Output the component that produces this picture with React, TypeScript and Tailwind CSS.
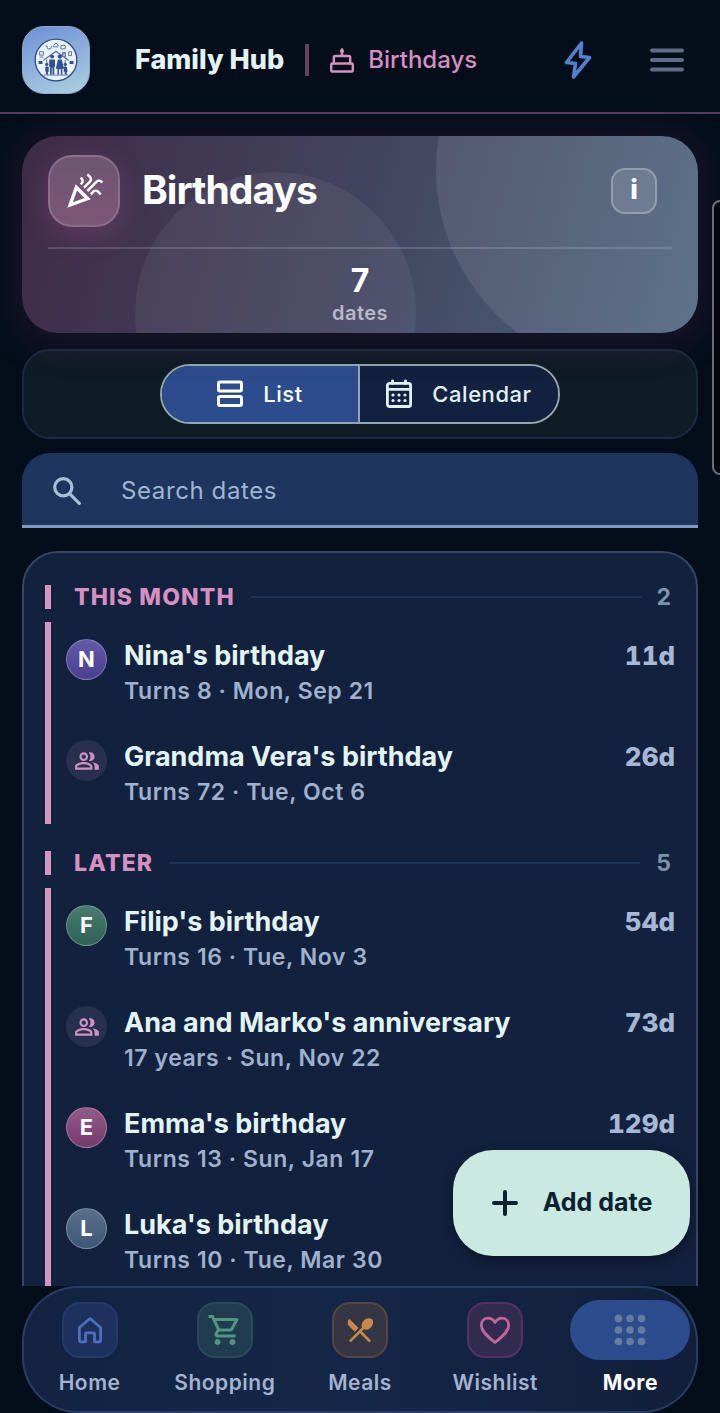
import React from "react";
import { MdOutlineCelebration, MdOutlinePeopleAlt, MdOutlineShoppingCart, MdRestaurantMenu } from "react-icons/md";

type Entry = { name: string; detail: string; days?: string; initial?: string; tone?: string };

const thisMonth: Entry[] = [
  { name: "Nina's birthday", detail: "Turns 8 · Mon, Sep 21", days: "11d", initial: "N", tone: "from-[#645ba6] to-[#4a3f90]" },
  { name: "Grandma Vera's birthday", detail: "Turns 72 · Tue, Oct 6", days: "26d" },
];

const later: Entry[] = [
  { name: "Filip's birthday", detail: "Turns 16 · Tue, Nov 3", days: "54d", initial: "F", tone: "from-[#4a7b70] to-[#2d6255]" },
  { name: "Ana and Marko's anniversary", detail: "17 years · Sun, Nov 22", days: "73d" },
  { name: "Emma's birthday", detail: "Turns 13 · Sun, Jan 17", days: "129d", initial: "E", tone: "from-[#925a8b] to-[#753a6d]" },
  { name: "Luka's birthday", detail: "Turns 10 · Tue, Mar 30", initial: "L", tone: "from-[#5b708b] to-[#3c5777]" },
];

function Logo() {
  return (
    <svg viewBox="0 0 68 68" className="size-full" aria-hidden="true">
      <circle cx="34" cy="34" r="21.5" fill="#eaf2fb" stroke="#31508f" strokeWidth="1.4" />
      <g fill="none" stroke="#5674ad" strokeWidth="1" strokeLinecap="round" strokeLinejoin="round">
        <path d="M21.500 34 34 25 46.500 34M41 29.500v-3h2.500v5" strokeWidth="1.400" />
        <path d="M24.500 34v11M43.500 34v11M22 49.500h24" />
        <path d="M23.500 19.500h1l1 3h3l1-2.500M32 18.500l2-2 2 2v2h-4zM39.500 19h4v3.500h-4zM17.500 25.500h3.500v3.500h-3.500zM17.500 31h3M47.500 25.500h2.500v4h-2.500z" />
      </g>
      <g fill="#31508f">
        <path d="M16 35h4v3h-4zM48 35h4v3h-4z" />
        <circle cx="30" cy="30.500" r="2" />
        <circle cx="38" cy="30.500" r="2.200" />
        <circle cx="24.500" cy="38.500" r="1.600" />
        <circle cx="43.500" cy="38.500" r="1.600" />
        <path d="M27 33.500h6V41h-.8v8h-1.800v-7h-.8v7h-1.800v-8H27zM36 33.500h4l2.200 9.500h-1.700v6H39v-5.500h-2V49h-1.500v-6h-1.700zM23 41h3.500v5h-.8v3h-2v-3H23zM42 41h3l1 5h-1v3h-2v-3h-1z" />
      </g>
    </svg>
  );
}

function CakeIcon() {
  return (
    <svg viewBox="0 0 24 27" className="h-[27px] w-6 shrink-0" fill="none" stroke="currentColor" strokeWidth="2.400" strokeLinejoin="round" strokeLinecap="round" aria-hidden="true">
      <rect x="1.200" y="16.500" width="21.600" height="8" rx="1" />
      <path d="M3.800 16.500v-6a1.500 1.500 0 0 1 1.500-1.500h13.400a1.500 1.500 0 0 1 1.500 1.500v6M12 9V5" />
      <path d="M12 .8c1.600 1.600 2.100 2.400 2.100 3.300a2.100 2.100 0 0 1-4.200 0c0-.9.500-1.700 2.100-3.300z" fill="currentColor" stroke="none" />
    </svg>
  );
}

function BoltIcon() {
  return (
    <svg viewBox="0 0 28 40" className="h-10 w-7" fill="none" stroke="#5280cf" strokeWidth="3.600" strokeLinejoin="round" aria-hidden="true">
      <path d="M17.500 3 2.500 22.500 11.500 23.500 9.500 37 25.500 17.500 16.500 16.500z" />
    </svg>
  );
}

function MenuIcon() {
  return (
    <svg viewBox="0 0 34 24" className="h-6 w-[34px]" stroke="#626c84" strokeWidth="4" strokeLinecap="round" aria-hidden="true">
      <path d="M2 2.500h30M2 12h30M2 21.500h30" />
    </svg>
  );
}

function RowsIcon() {
  return (
    <svg viewBox="0 0 26 28" className="h-7 w-[26px]" fill="none" stroke="currentColor" strokeWidth="3" aria-hidden="true">
      <rect x="1.500" y="2" width="23" height="9" rx="1.500" />
      <rect x="1.500" y="16.500" width="23" height="9" rx="1.500" />
    </svg>
  );
}

function CalendarIcon() {
  return (
    <svg viewBox="0 0 26 30" className="h-[30px] w-[26px]" aria-hidden="true">
      <g fill="none" stroke="currentColor" strokeWidth="2.800" strokeLinecap="round">
        <rect x="1.400" y="4.300" width="23.200" height="23.200" rx="2" />
        <path d="M1.500 10.300h23M6.500 1.800v2.500M19.500 1.800v2.500" />
      </g>
      <g fill="currentColor">
        {[16, 21.5].map((y) => [7, 13, 19].map((x) => <circle key={`${x}-${y}`} cx={x} cy={y} r="1.600" />))}
      </g>
    </svg>
  );
}

function SearchIcon() {
  return (
    <svg viewBox="0 0 28 28" className="size-7 shrink-0" fill="none" stroke="currentColor" strokeWidth="3.200" strokeLinecap="round" aria-hidden="true">
      <circle cx="10.300" cy="10.300" r="8.600" />
      <path d="m16.800 16.800 9.500 9.500" />
    </svg>
  );
}

function HomeIcon() {
  return (
    <svg viewBox="0 0 28 30" className="h-[30px] w-7" fill="none" stroke="#4c70bd" strokeWidth="2.800" strokeLinejoin="round" aria-hidden="true">
      <path d="M3.400 12.500 14 3.500l10.600 9v12.700a1.600 1.600 0 0 1-1.600 1.600h-4.500v-8a1 1 0 0 0-1-1h-7a1 1 0 0 0-1 1v8H5a1.600 1.600 0 0 1-1.600-1.600z" />
    </svg>
  );
}

function HeartIcon() {
  return (
    <svg viewBox="0 0 32 28" className="h-7 w-8" fill="none" stroke="#c2659d" strokeWidth="2.800" strokeLinejoin="round" aria-hidden="true">
      <path d="M16 26.500C6.500 19 2.300 14.500 2.300 9.300 2.300 5 5.300 2.200 9 2.200c2.800 0 5.300 1.500 7 4.300 1.700-2.800 4.200-4.300 7-4.300 3.700 0 6.700 2.800 6.700 7.100 0 5.200-4.200 9.700-13.700 17.200z" />
    </svg>
  );
}

function DotsIcon() {
  return (
    <svg viewBox="0 0 32 32" className="size-8" fill="#647d9c" aria-hidden="true">
      {[4.5, 16, 27.5].map((y) => [4.5, 16, 27.5].map((x) => <circle key={`${x}-${y}`} cx={x} cy={y} r="3.800" />))}
    </svg>
  );
}

function DateRow({ entry }: { entry: Entry }) {
  return (
    <li className="flex h-[101px] items-start pt-4 pl-[15px]">
      {entry.initial ? (
        <span className={`mt-px flex size-[41px] shrink-0 items-center justify-center rounded-full border border-white/25 bg-linear-to-b text-[22px] font-bold text-white ${entry.tone}`}>
          {entry.initial}
        </span>
      ) : (
        <span className="mt-px flex size-[41px] shrink-0 items-center justify-center rounded-full bg-[#27304f] text-[#d092c0]">
          <MdOutlinePeopleAlt className="size-[26px]" aria-hidden="true" />
        </span>
      )}
      <div className="ml-[17px] min-w-0 flex-1">
        <h3 className="truncate text-[27px] leading-9 font-bold text-[#e2f4f3]">{entry.name}</h3>
        <p className="text-[23px] leading-[34px] font-semibold tracking-wide text-[#9fb1cd]">{entry.detail}</p>
      </div>
      <span className="text-[26px] leading-9 font-extrabold text-[#a6b8d4] tabular-nums">{entry.days}</span>
    </li>
  );
}

function DateSection({ title, count, entries }: { title: string; count: number; entries: Entry[] }) {
  return (
    <section className="mb-[27px]">
      <div className="mb-[13px] flex h-6 items-center border-l-6 border-[#d296c1] pr-1 pl-[23px]">
        <h2 className="text-[23px] leading-6 font-extrabold tracking-wider text-[#d58fc0]">{title}</h2>
        <span className="mx-4 h-[2px] flex-1 bg-[#1f3352]" />
        <span className="text-[23px] leading-6 font-bold text-[#7e92ae]">{count}</span>
      </div>
      <ul className="border-l-6 border-[#d296c1]">
        {entries.map((e) => (
          <DateRow key={e.name} entry={e} />
        ))}
      </ul>
    </section>
  );
}

function NavItem({ label, tone, children }: { label: string; tone: string; children: React.ReactNode }) {
  return (
    <a href="#" className="flex flex-1 flex-col items-center pt-4 text-[21px] font-semibold tracking-wide text-[#a3b3d0]">
      <span className={`flex size-14 items-center justify-center rounded-[18px] border-2 ${tone}`}>{children}</span>
      <span className="mt-[13px] leading-6">{label}</span>
    </a>
  );
}

export default function App() {
  return (
    <div className="relative flex h-screen flex-col overflow-hidden bg-[#040e1b] font-['Inter',sans-serif]">
      <header className="flex h-[114px] shrink-0 items-center border-b-2 border-[#59395a] pt-2 pr-9 pl-[22px]">
        <span className="size-[68px] shrink-0 overflow-hidden rounded-[22px] border border-[#8eaacf] bg-linear-160 from-[#6c90d4] via-[#8fb0dc] to-[#abd0dc]">
          <Logo />
        </span>
        <h1 className="ml-[45px] text-[27px] font-extrabold whitespace-nowrap text-[#e3f3f5]">Family Hub</h1>
        <span className="mx-[21px] h-8 w-1 shrink-0 bg-[#64435f]" />
        <div className="flex items-center gap-[14px] text-[#d58fc0]">
          <CakeIcon />
          <span className="text-[24px] font-medium">Birthdays</span>
        </div>
        <div className="ml-auto flex items-center gap-[58px]">
          <button type="button" aria-label="Quick actions"><BoltIcon /></button>
          <button type="button" aria-label="Menu"><MenuIcon /></button>
        </div>
      </header>

      <main className="min-h-0 flex-1 overflow-hidden px-[22px] pt-[22px]">
        <section className="relative h-[197px] rounded-[36px] bg-linear-105 from-[#3e2b48] via-[#42455f] via-50% to-[#4d657f] shadow-[0_4px_36px_8px_rgba(110,50,100,0.2)]">
          <div className="absolute inset-0 overflow-hidden rounded-[36px]">
            <div className="absolute -top-[171px] -right-[147px] size-[409px] rounded-full bg-white/9" />
            <div className="absolute top-[36px] left-[113px] size-[281px] rounded-full bg-white/6" />
          </div>
          <div className="relative mx-[26px] flex h-[113px] items-center border-b-2 border-white/15 pb-[2px]">
            <span className="flex size-[72px] shrink-0 items-center justify-center rounded-[24px] border-2 border-white/15 bg-linear-to-b from-[#6d5572] to-[#7d5678] text-white shadow-[0_8px_26px_rgba(180,80,150,0.3)]">
              <MdOutlineCelebration className="size-10" aria-hidden="true" />
            </span>
            <h2 className="ml-[22px] text-[39px] font-bold tracking-tight text-white">Birthdays</h2>
            <button type="button" aria-label="About birthdays" className="mr-[15px] ml-auto flex size-[46px] items-center justify-center rounded-[14px] border-2 border-white/25 bg-white/12 text-[27px] font-extrabold text-white">
              i
            </button>
          </div>
          <div className="relative flex flex-col items-center pt-4">
            <strong className="text-[32px] leading-8 font-bold text-white">7</strong>
            <span className="text-[20px] leading-8 font-semibold tracking-wide text-[#b7b8ca]">dates</span>
          </div>
        </section>

        <div className="mt-4 flex h-[90px] items-center justify-center rounded-[28px] border-2 border-[#1a2a40] bg-[#0f1b25]">
          <div className="grid h-[60px] w-[400px] grid-cols-2 overflow-hidden rounded-full border-2 border-[#91a8b1] text-[22px] font-medium tracking-wide text-[#e0f2f4]">
            <button type="button" aria-pressed="true" className="flex items-center justify-center gap-5 border-r-2 border-[#91a8b1] bg-[#2c4c8e] text-white">
              <RowsIcon />
              List
            </button>
            <button type="button" aria-pressed="false" className="flex items-center justify-center gap-5 bg-[#12213f]">
              <CalendarIcon />
              Calendar
            </button>
          </div>
        </div>

        <label className="mt-[14px] flex h-[75px] items-center rounded-t-[28px] border-b-3 border-[#8297bd] bg-[#1e355e] pt-1 pl-[31px] text-[#a8bfdc]">
          <SearchIcon />
          <input type="search" aria-label="Search dates" placeholder="Search dates" className="ml-10 w-full bg-transparent text-[24px] tracking-wide outline-none placeholder:text-[#9fb5d4]" />
        </label>

        <div className="mt-[23px] rounded-[36px] border-2 border-[#364761] bg-[#12213e] px-[21px] pt-8">
          <DateSection title="THIS MONTH" count={2} entries={thisMonth} />
          <DateSection title="LATER" count={5} entries={later} />
        </div>
      </main>

      <button type="button" className="absolute right-[30px] bottom-[157px] flex h-[106px] w-[237px] items-center justify-center gap-6 rounded-[40px] bg-[#c9e9e1] text-[25px] font-bold text-[#0a2130] shadow-[0_4px_12px_rgba(0,0,0,0.4)]">
        <svg viewBox="0 0 28 28" className="size-7" stroke="currentColor" strokeWidth="4" strokeLinecap="round" aria-hidden="true">
          <path d="M14 3v22M3 14h22" />
        </svg>
        Add date
      </button>

      <nav aria-label="Main" className="mx-[22px] flex h-[127px] shrink-0 rounded-[56px] bg-linear-to-r from-[#132341] via-[#152748] to-[#111f39] inset-ring-2 inset-ring-[#283c66]">
        <NavItem label="Home" tone="border-[#24396c] bg-[#1d315d]"><HomeIcon /></NavItem>
        <NavItem label="Shopping" tone="border-[#274b58] bg-[#213c50]">
          <MdOutlineShoppingCart className="size-9 text-[#519681]" aria-hidden="true" />
        </NavItem>
        <NavItem label="Meals" tone="border-[#584541] bg-[#343644]">
          <MdRestaurantMenu className="size-8 text-[#c7884a]" aria-hidden="true" />
        </NavItem>
        <NavItem label="Wishlist" tone="border-[#553261] bg-[#322b50]"><HeartIcon /></NavItem>
        <a href="#" aria-current="page" className="flex flex-1 flex-col items-center pt-[14px] text-[21px] font-bold tracking-wide text-white">
          <span className="flex h-[60px] w-[120px] items-center justify-center rounded-[30px] bg-[#2c4c8e]"><DotsIcon /></span>
          <span className="mt-[11px] leading-6">More</span>
        </a>
      </nav>

      <div className="absolute top-[200px] -right-1 h-[275px] w-3 rounded-l-lg border-2 border-[#6a6e77] bg-[#050710]" />
    </div>
  );
}
